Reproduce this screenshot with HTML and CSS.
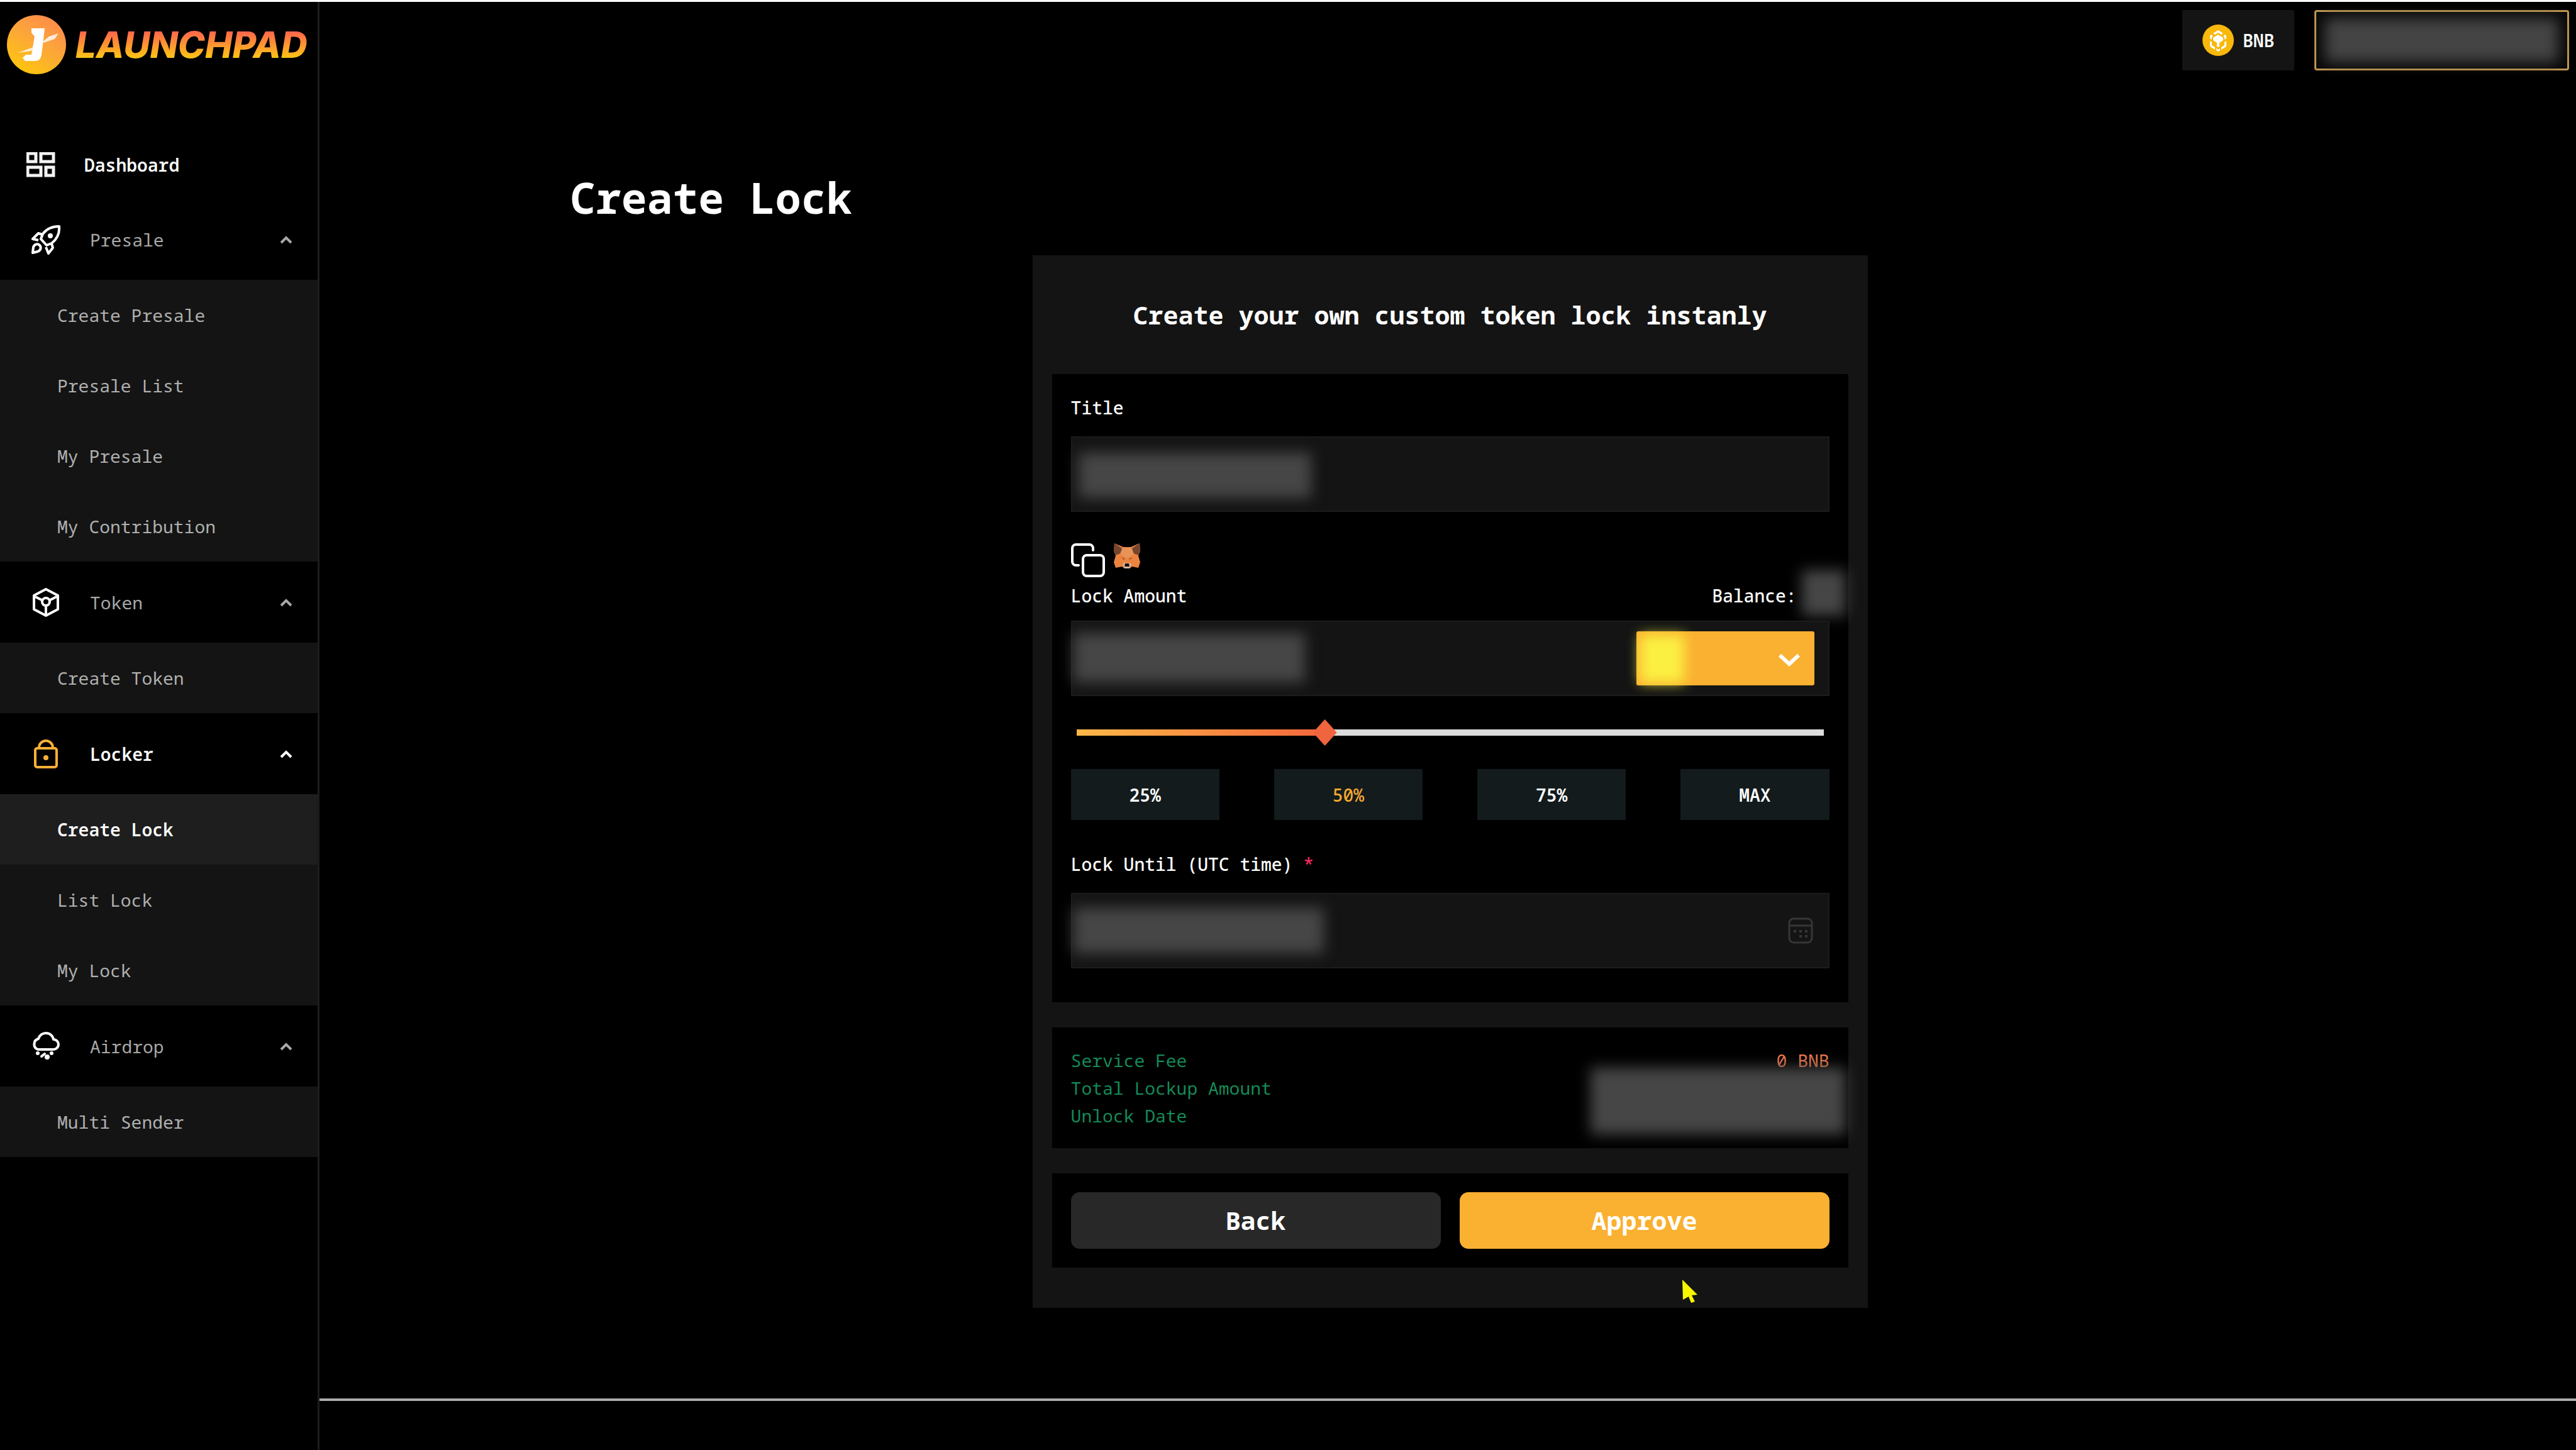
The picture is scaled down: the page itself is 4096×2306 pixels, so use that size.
FILE: index.html
```html
<!DOCTYPE html>
<html lang="en">
<head>
<meta charset="utf-8">
<meta name="viewport" content="width=device-width, initial-scale=1">
<title>Launchpad</title>
<link rel="stylesheet" href="styles.css">
</head>
<body>
<div class="app">
  <aside class="sidebar">
    <a class="brand" href="#">
      <svg class="brand-mark" viewBox="0 0 94 94" aria-hidden="true">
        <defs>
          <linearGradient id="coin" x1="0.2" y1="1" x2="0.8" y2="0"><stop offset="0" stop-color="#ffc80a"/><stop offset="0.55" stop-color="#fba63a"/><stop offset="1" stop-color="#ff8a4c"/></linearGradient>
        </defs>
        <circle cx="47" cy="47" r="47" fill="url(#coin)"/>
        <path d="M39 21h21l-3 27-2 15c-1 7-5 10-10 10H29l-4-5 5-5h9l5-29-5-6z" fill="#fff"/>
        <path d="M57 42l10-8 15-5-6 9-17 6zM42 51L17 60l22-3z" fill="#fff" opacity=".8"/>
      </svg>
      <span class="brand-name">LAUNCHPAD</span>
    </a>
    <nav class="nav">
      <a class="nav-top" href="#">
        <svg class="icon-grid" viewBox="0 0 46 40" fill="none" stroke="#f2f2f2" stroke-width="5" aria-hidden="true"><path d="M2 2h13v13H2zM23 2h20v13H23zM2 24h21v13H2zM31 24h12v13H31z"/></svg>
        <span>Dashboard</span>
      </a>

      <button class="nav-head" type="button" aria-expanded="true">
        <svg class="icon" viewBox="0 0 48 48" fill="none" stroke="#fff" stroke-width="4" stroke-linejoin="round" aria-hidden="true"><path d="M45 3C34 3 25 7 19 15l-3 8 9 10 8-3C42 23 46 14 45 3zM18 16l-6-2-9 9 9 2M33 30l2 7-7 9-4-10"/><path d="M3 45l1-9c2-5 7-6 10-3s2 8-3 10z"/><circle cx="31" cy="18" r="3" fill="#fff" stroke-width="2"/></svg>
        <span>Presale</span>
        <svg class="chevron" viewBox="0 0 20 14" aria-hidden="true"><path d="M2 12l8-8 8 8"/></svg>
      </button>
      <ul class="nav-sub">
        <li><a href="#">Create Presale</a></li>
        <li><a href="#">Presale List</a></li>
        <li><a href="#">My Presale</a></li>
        <li><a href="#">My Contribution</a></li>
      </ul>

      <button class="nav-head" type="button" aria-expanded="true">
        <svg class="icon" viewBox="0 0 48 48" fill="none" stroke="#fff" stroke-width="4" stroke-linejoin="round" aria-hidden="true"><path d="M24 3l19 10v22L24 45 5 35V13z"/><path d="M7 15l12 6M41 15l-12 6M24 29v14"/><circle cx="24" cy="23" r="6"/></svg>
        <span>Token</span>
        <svg class="chevron" viewBox="0 0 20 14" aria-hidden="true"><path d="M2 12l8-8 8 8"/></svg>
      </button>
      <ul class="nav-sub">
        <li><a href="#">Create Token</a></li>
      </ul>

      <button class="nav-head is-open" type="button" aria-expanded="true">
        <svg class="icon" viewBox="0 0 48 48" fill="none" stroke="#fbb034" stroke-width="4" stroke-linejoin="round" aria-hidden="true"><rect x="7" y="15" width="34" height="30" rx="3"/><path d="M13 15v-1a11 11 0 0 1 22 0v1"/><circle cx="24" cy="30" r="4" fill="#fbb034" stroke="none"/></svg>
        <span>Locker</span>
        <svg class="chevron" viewBox="0 0 20 14" aria-hidden="true"><path d="M2 12l8-8 8 8"/></svg>
      </button>
      <ul class="nav-sub">
        <li><a class="is-current" href="#" aria-current="page">Create Lock</a></li>
        <li><a href="#">List Lock</a></li>
        <li><a href="#">My Lock</a></li>
      </ul>

      <button class="nav-head" type="button" aria-expanded="true">
        <svg class="icon" viewBox="0 0 48 48" fill="none" stroke="#fff" stroke-width="4" stroke-linecap="round" stroke-linejoin="round" aria-hidden="true"><path d="M11 29a9 9 0 0 1 1-17c2-6 7-9 12-9 6 0 11 4 12 10a8 8 0 0 1 0 16z"/><path d="M22 36l-5 4"/><circle cx="11" cy="35" r="3" fill="#fff" stroke="none"/><circle cx="33" cy="35" r="3" fill="#fff" stroke="none"/><circle cx="26" cy="41" r="4" fill="#fff" stroke="none"/></svg>
        <span>Airdrop</span>
        <svg class="chevron" viewBox="0 0 20 14" aria-hidden="true"><path d="M2 12l8-8 8 8"/></svg>
      </button>
      <ul class="nav-sub">
        <li><a href="#">Multi Sender</a></li>
      </ul>
    </nav>
  </aside>

  <div class="page">
    <header class="topbar">
      <button class="network" type="button">
        <svg class="bnb" viewBox="0 0 50 50" aria-hidden="true"><circle cx="25" cy="25" r="25" fill="#f8b80c"/><path d="M25 9l8 5-3 2-5-3-5 3-3-2zM14 16l3 2-2 2v4l-3-2v-4zM36 16l-3 2 2 2v4l3-2v-4zM25 16l8 5v4l-6 4v6l-2 1-2-1v-6l-6-4v-4zM12 26l3 2v5l5 3v4l-8-5zM38 26l-3 2v5l-5 3v4l8-5zM22 38l3 2 3-2v3l-3 2-3-2z" fill="#fff"/></svg>
        <span>BNB</span>
      </button>
      <button class="wallet" type="button" aria-label="Wallet"><span class="wallet-mask"></span></button>
    </header>

    <main class="content">
      <h1>Create Lock</h1>
      <form class="card">
        <h2>Create your own custom token lock instanly</h2>

        <section class="panel fields">
          <label class="label" for="title">Title</label>
          <div class="field">
            <input id="title" type="text">
            <span class="mask mask-title"></span>
          </div>

          <div class="token-tools">
            <svg class="copy" viewBox="0 0 54 54" fill="none" stroke="#fff" stroke-width="4" stroke-linecap="round" aria-hidden="true"><rect x="19" y="19" width="33" height="33" rx="6"/><path d="M12 35H8a6 6 0 0 1-6-6V8a6 6 0 0 1 6-6h21a6 6 0 0 1 6 6v3"/></svg>
            <svg class="fox" viewBox="0 0 42 40" aria-hidden="true"><path d="M1 0l14 6h12L41 0l1 12-3 8 3 10-3 9-10-2-4 3h-8l-4-3-10 2-3-9 3-10-3-8z" fill="#ec8440"/><path d="M1 0l12 8-2 8-8 3-3-8zM41 0L29 8l2 8 8 3 3-8z" fill="#74452f"/><path d="M14 7h14l4 10-11 7-11-7z" fill="#e89358"/><path d="M12 22l6 2-2 3zM30 22l-6 2 2 3z" fill="#b0602c"/><path d="M14 34l3-3h8l3 3-3 6h-8z" fill="#d8b8a0"/><path d="M18 32h6l1 5h-8z" fill="#1c1410"/></svg>
          </div>

          <div class="label-row">
            <label class="label" for="amount">Lock Amount</label>
            <span class="balance">Balance:<span class="mask mask-balance"></span></span>
          </div>
          <div class="field">
            <input id="amount" type="text">
            <span class="mask mask-amount"></span>
            <div class="unit">
              <select aria-label="Token"><option></option></select>
              <span class="unit-glow"></span>
              <svg class="unit-arrow" viewBox="0 0 36 22" fill="none" stroke="#fff" stroke-width="6" aria-hidden="true"><path d="M3 4l15 14L33 4"/></svg>
            </div>
          </div>

          <input class="slider" type="range" min="0" max="1000" value="327" aria-label="Share of balance">

          <div class="percents">
            <button type="button">25%</button>
            <button class="is-picked" type="button">50%</button>
            <button type="button">75%</button>
            <button type="button">MAX</button>
          </div>

          <label class="label" for="until">Lock Until (UTC time) <span class="required">*</span></label>
          <div class="field">
            <input id="until" type="text">
            <span class="mask mask-until"></span>
            <svg class="calendar" viewBox="0 0 40 42" fill="none" stroke="#363636" stroke-width="3" aria-hidden="true"><rect x="2" y="2" width="36" height="38" rx="7"/><path d="M2 13h36"/><path d="M9 22h4M18 22h4M27 22h4M18 30h4M27 30h4" stroke-width="4"/></svg>
          </div>
        </section>

        <section class="panel summary">
          <dl>
            <div><dt>Service Fee</dt><dd>0 BNB</dd></div>
            <div><dt>Total Lockup Amount</dt></div>
            <div><dt>Unlock Date</dt></div>
          </dl>
          <span class="mask mask-summary"></span>
        </section>

        <section class="panel actions">
          <button class="back" type="button">Back</button>
          <button class="approve" type="button">Approve</button>
        </section>

        <svg class="pointer" viewBox="0 0 24 37" aria-hidden="true"><path d="M0 0l24 24-9 1 5 10-6 2-4-10-9 5z" fill="#f6f600"/></svg>
      </form>
    </main>

    <footer class="footer"></footer>
  </div>
</div>
</body>
</html>
```

FILE: styles.css
```css
* { box-sizing: border-box; }

body {
  margin: 0;
  background: #000;
  color: #fff;
  font-family: "Noto Sans Mono", "DejaVu Sans Mono", monospace;
  font-size: 28px;
  line-height: 44px;
}

h1, h2, ul, dl, dd { margin: 0; padding: 0; }
ul { list-style: none; }
a { color: inherit; text-decoration: none; }
button, input, select { font: inherit; color: inherit; border: 0; border-radius: 0; margin: 0; }
svg { display: block; flex: none; }

.app {
  display: flex;
  min-height: 100vh;
  border-top: 3px solid #fff;
}

/* Sidebar */
.sidebar {
  flex: none;
  width: 508px;
  border-right: 3px solid #1c1c1c;
}
.brand {
  display: flex;
  align-items: center;
  gap: 15px;
  height: 205px;
  padding: 21px 0 90px 11px;
}
.brand-mark { width: 94px; height: 94px; }
.brand-name {
  font: italic 800 58px/64px Inter, sans-serif;
  background: linear-gradient(#ff6a4a 20%, #ffc814 85%);
  -webkit-background-clip: text;
  background-clip: text;
  color: transparent;
}
.nav-top {
  display: flex;
  align-items: center;
  gap: 46px;
  height: 108px;
  padding-left: 42px;
  font-weight: 600;
}
.icon-grid { width: 46px; height: 40px; }
.nav-head {
  display: flex;
  align-items: center;
  width: 100%;
  height: 129px;
  padding: 0 40px 0 49px;
  background: #000;
  color: #a8a8a8;
  text-align: left;
}
.nav-head span { flex: 1; padding-left: 46px; }
.icon { width: 48px; height: 48px; }
.chevron {
  width: 20px;
  height: 14px;
  fill: none;
  stroke: currentColor;
  stroke-width: 4;
}
.nav-head.is-open { color: #fff; font-weight: 600; }
.nav-sub a {
  display: flex;
  align-items: center;
  height: 112px;
  padding-left: 91px;
  background: #141414;
  color: #b0b0b0;
}
.nav-sub a.is-current { background: #1e1e1e; color: #fff; font-weight: 600; }

/* Page */
.page {
  flex: 1;
  display: flex;
  flex-direction: column;
  min-width: 0;
}
.topbar {
  display: flex;
  justify-content: flex-end;
  gap: 32px;
  padding: 13px 11px 0 0;
}
.network {
  display: flex;
  align-items: center;
  gap: 14px;
  width: 178px;
  height: 96px;
  padding: 0 0 0 32px;
  background: #141414;
  font-weight: 600;
}
.bnb { width: 50px; height: 50px; }
.wallet {
  width: 405px;
  height: 96px;
  padding: 10px 14px;
  background: #080808;
  border: 3px solid #c09850;
  border-radius: 4px;
}
.wallet-mask {
  display: block;
  height: 100%;
  background: #444;
  filter: blur(11px);
}
.content {
  flex: 1;
  padding: 162px 10.9% 0 11.1%;
}
h1 {
  font-size: 68px;
  font-weight: 700;
  line-height: 80px;
}
.card {
  position: relative;
  width: 1328px;
  max-width: 100%;
  margin: 52px auto 0;
  padding: 62px 31px 64px;
  background: #141414;
}
h2 {
  margin-bottom: 61px;
  font-size: 40px;
  font-weight: 700;
  line-height: 66px;
  text-align: center;
}
.panel { padding: 30px; background: #000; }
.panel + .panel { margin-top: 40px; }

/* Fields */
.fields { padding: 31px 30px 54px; }
.label { display: block; font-weight: 500; }
.field {
  position: relative;
  display: flex;
  height: 120px;
  background: #141414;
  border: 2px solid #1c1c1c;
}
.label + .field { margin-top: 24px; }
.field input { flex: 1; min-width: 0; padding: 0 24px; background: none; }
.mask {
  position: absolute;
  background: #464646;
  filter: blur(11px);
}
.mask-title { left: 10px; top: 24px; width: 370px; height: 72px; }
.mask-amount { left: 2px; top: 18px; width: 368px; height: 78px; }
.mask-until { left: 2px; top: 22px; width: 398px; height: 72px; }
.mask-balance { right: -26px; top: -18px; width: 70px; height: 72px; }
.mask-summary { right: 4px; top: 64px; width: 406px; height: 106px; }
.token-tools {
  display: flex;
  gap: 14px;
  margin-top: 50px;
}
.copy { width: 54px; height: 54px; }
.fox { width: 42px; height: 40px; }
.label-row {
  display: flex;
  justify-content: space-between;
  margin: 7px 0 18px;
}
.balance { position: relative; padding-right: 52px; font-weight: 500; }
.unit {
  position: relative;
  width: 283px;
  margin: 15px 22px 15px 0;
}
.unit select {
  appearance: none;
  width: 100%;
  height: 100%;
  background: #fab030;
  border-radius: 3px;
}
.unit-glow {
  position: absolute;
  left: 6px;
  top: 6px;
  width: 70px;
  height: 76px;
  background: #fbf042;
  filter: blur(10px);
}
.unit-arrow {
  position: absolute;
  right: 22px;
  top: 34px;
  width: 36px;
  height: 22px;
}
.slider {
  display: block;
  appearance: none;
  width: calc(100% - 18px);
  height: 10px;
  margin: 53px 9px;
  background: linear-gradient(90deg, #fdb848, #f3673c 33%, #dcdcdc 33%);
}
.slider::-webkit-slider-thumb {
  appearance: none;
  width: 38px;
  height: 42px;
  background: #f0643e;
  clip-path: polygon(50% 0, 100% 50%, 50% 100%, 0 50%);
}
.percents {
  display: grid;
  grid-template-columns: repeat(4, 1fr);
  gap: 87px;
  margin-bottom: 48px;
}
.percents button {
  height: 81px;
  padding: 0;
  background: #131b1d;
  font-weight: 600;
}
.percents .is-picked { color: #f5a92e; font-weight: 500; }
.required { color: #ff2b5e; }
.calendar {
  position: absolute;
  right: 24px;
  top: 37px;
  width: 40px;
  height: 42px;
}

/* Summary and actions */
.summary { position: relative; }
.summary dl div { display: flex; justify-content: space-between; }
.summary dt { color: #148a58; }
.summary dd { color: #f07a4c; }
.actions { display: flex; gap: 30px; }
.actions button {
  flex: 1;
  height: 90px;
  border-radius: 14px;
  font-size: 40px;
  font-weight: 700;
}
.back { background: #282828; }
.approve { background: #fab030; }
.pointer {
  position: absolute;
  left: 1033px;
  bottom: 8px;
  width: 24px;
  height: 37px;
}
.footer {
  height: 82px;
  border-top: 4px solid #acacac;
}
```
